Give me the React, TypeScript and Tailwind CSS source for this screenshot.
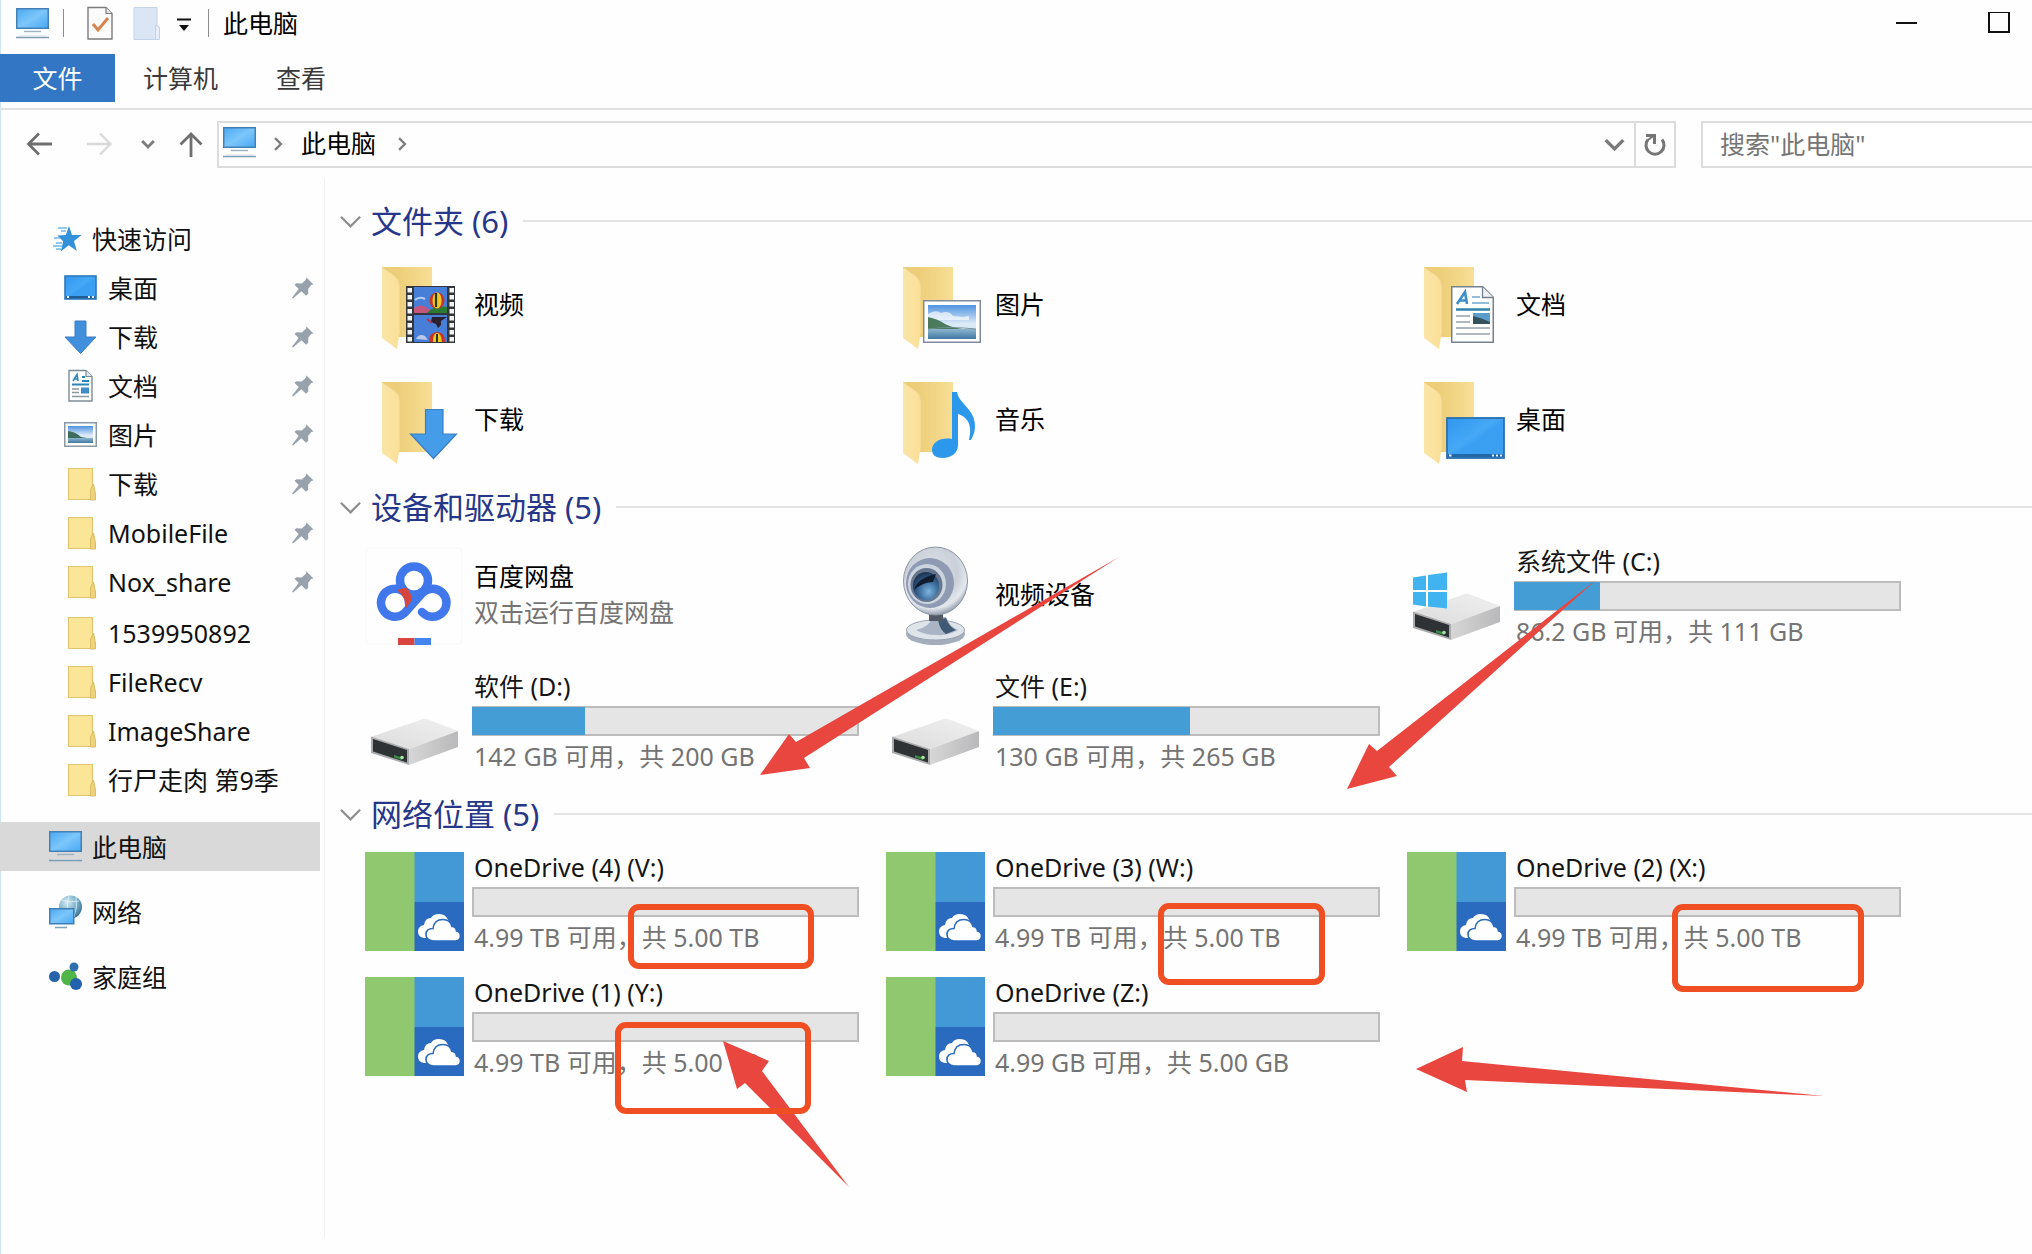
import type { ReactNode } from 'react';

const FONT = "font-['Noto_Sans','Noto_Sans_CJK_SC',sans-serif]";

/* ---------- small icons ---------- */

function Gradients() {
  return (
    <svg width="0" height="0" className="absolute" aria-hidden="true">
      <defs>
        <linearGradient id="screen" x1="0" y1="0" x2="1" y2="1">
          <stop offset="0" stopColor="#4aa9f0" />
          <stop offset="0.5" stopColor="#7cc6fb" />
          <stop offset="1" stopColor="#48a8f2" />
        </linearGradient>
        <linearGradient id="desk" x1="0" y1="0" x2="1" y2="1">
          <stop offset="0" stopColor="#2f97ee" />
          <stop offset="0.45" stopColor="#46a8f6" />
          <stop offset="0.55" stopColor="#3a9ff2" />
          <stop offset="1" stopColor="#3d9ff0" />
        </linearGradient>
        <linearGradient id="back" x1="0" y1="0" x2="1" y2="0">
          <stop offset="0.3" stopColor="#eccd78" />
          <stop offset="1" stopColor="#f8df96" />
        </linearGradient>
        <linearGradient id="flap" x1="0" y1="0" x2="1" y2="0">
          <stop offset="0" stopColor="#fae5a6" />
          <stop offset="1" stopColor="#fbdf98" />
        </linearGradient>
        <linearGradient id="sky" x1="0" y1="0" x2="0" y2="1">
          <stop offset="0" stopColor="#4f93e0" />
          <stop offset="0.55" stopColor="#dcebf7" />
          <stop offset="1" stopColor="#cfe2ee" />
        </linearGradient>
        <linearGradient id="water" x1="0" y1="0" x2="0" y2="1">
          <stop offset="0" stopColor="#8fb5cf" />
          <stop offset="1" stopColor="#3f78a3" />
        </linearGradient>
        <linearGradient id="driveTop" x1="0" y1="1" x2="1" y2="0">
          <stop offset="0" stopColor="#dcdcdc" />
          <stop offset="1" stopColor="#f0f0f0" />
        </linearGradient>
        <linearGradient id="driveSide" x1="0" y1="0" x2="1" y2="0">
          <stop offset="0" stopColor="#d6d6d6" />
          <stop offset="1" stopColor="#b9b9bb" />
        </linearGradient>
        <radialGradient id="cam" cx="0.45" cy="0.35" r="0.65">
          <stop offset="0" stopColor="#dfe3ea" />
          <stop offset="0.6" stopColor="#c9ced8" />
          <stop offset="0.85" stopColor="#e4e8ee" />
          <stop offset="1" stopColor="#98a1b0" />
        </radialGradient>
        <radialGradient id="lens" cx="0.6" cy="0.7" r="0.7">
          <stop offset="0" stopColor="#7db4dd" />
          <stop offset="0.5" stopColor="#3e6f9f" />
          <stop offset="1" stopColor="#1d3350" />
        </radialGradient>
        <radialGradient id="globe" cx="0.35" cy="0.3" r="0.8">
          <stop offset="0" stopColor="#d5ecf4" />
          <stop offset="0.6" stopColor="#6fa9c2" />
          <stop offset="1" stopColor="#2f6a8a" />
        </radialGradient>
      </defs>
    </svg>
  );
}

function MonitorIcon() {
  return (
    <svg width="33" height="33" viewBox="0 0 33 33" className="shrink-0" aria-hidden="true">
      <rect x="0.75" y="1.75" width="31.5" height="19.5" fill="url(#screen)" stroke="#4480b5" strokeWidth="1.5" />
      <path d="M8 24.5h17" stroke="#9db3c4" strokeWidth="1.4" />
      <path d="M0 30.5h33" stroke="#7d9db5" strokeWidth="1.5" />
      <path d="M3 29h27" stroke="#d4dde4" strokeWidth="1" />
    </svg>
  );
}

function StarIcon() {
  return (
    <svg width="33" height="28" viewBox="0 0 33 28" className="shrink-0" aria-hidden="true">
      <path
        d="M20 1l3 8.900 9.500.1-7.500 6 2.800 9.900-8-5.700-8 6.300 2.400-10.300-5.900-5.700 8.500-.6z"
        fill="#3391da"
      />
      <path d="M9 3h9M12 6h5M5 13h6M4 21h9M7 18h6M7 24h5" stroke="#6db8ee" strokeWidth="1.400" />
    </svg>
  );
}

function DesktopSmall() {
  return (
    <svg width="33" height="33" viewBox="0 0 33 33" className="shrink-0" aria-hidden="true">
      <rect x="1" y="5" width="31" height="23" fill="url(#desk)" stroke="#2d78bb" strokeWidth="1.6" />
      <path d="M2 26.2h29" stroke="#1f5d94" strokeWidth="2.4" />
      <path d="M3 26h2M24 26h2M28 26h2" stroke="#e8f4ff" strokeWidth="1.8" />
    </svg>
  );
}

function DownloadSmall() {
  return (
    <svg width="33" height="34" viewBox="0 0 33 34" className="shrink-0" aria-hidden="true">
      <path d="M11 1h11v16h10L16.500 33.500 1 17h10z" fill="#428fdc" stroke="#3b80c4" />
    </svg>
  );
}

function DocumentSmall() {
  return (
    <svg width="33" height="34" viewBox="0 0 33 34" className="shrink-0" aria-hidden="true">
      <path d="M5 1.500h17l6 6V32H5z" fill="#fff" stroke="#7d8b97" strokeWidth="1.4" />
      <path d="M22 1.500v6h6" fill="#e3e8ec" stroke="#7d8b97" strokeWidth="1.2" />
      <path d="M9 12l4-6.500 1 6.500M10.500 10h4" stroke="#2f83bf" strokeWidth="1.6" fill="none" />
      <path d="M18 8h3M18 12h7M8 15.500h17" stroke="#2b86b8" strokeWidth="1.8" />
      <path d="M8 20h7M8 23.500h7M8 27.500h17" stroke="#8b979f" strokeWidth="1.3" />
      <rect x="17" y="18.500" width="8" height="6" fill="#3f8dc8" />
    </svg>
  );
}

function PictureSmall() {
  return (
    <svg width="33" height="33" viewBox="0 0 33 33" className="shrink-0" aria-hidden="true">
      <rect x="0.75" y="4.75" width="31.500" height="23.500" fill="#fff" stroke="#8a98a6" strokeWidth="1.5" />
      <rect x="4" y="8" width="25" height="17" fill="url(#sky)" />
      <path d="M4 13q8 1 13 6l12 2H4z" fill="#3d6b5c" />
      <path d="M4 20h25v5H4z" fill="url(#water)" />
    </svg>
  );
}

function FolderSmall() {
  return (
    <svg width="33" height="34" viewBox="0 0 33 34" className="shrink-0" aria-hidden="true">
      <path d="M4.500 1.500h24v31h-24z" fill="#fbe597" stroke="#e2c571" strokeWidth="1.2" />
      <path d="M26.500 33V23l3-6 2 10v6z" fill="#efd27c" stroke="#dcbc62" />
    </svg>
  );
}

function NetworkSmall() {
  return (
    <svg width="33" height="34" viewBox="0 0 33 34" className="shrink-0" aria-hidden="true">
      <circle cx="21.500" cy="12" r="11.500" fill="url(#globe)" />
      <path d="M13 5q8 3 17 1M20 1q-4 10 2 22M27 2q2 9-2 20" stroke="#e3f2f7" strokeWidth="0.8" fill="none" />
      <rect x="0.75" y="13.750" width="24" height="15" fill="url(#screen)" stroke="#3f7fb5" strokeWidth="1.5" />
      <path d="M6 32.500h12" stroke="#7fa3bd" strokeWidth="1.600" />
    </svg>
  );
}

function HomegroupSmall() {
  return (
    <svg width="33" height="30" viewBox="0 0 33 30" className="shrink-0" aria-hidden="true">
      <circle cx="20" cy="15.500" r="8" fill="#4fb548" />
      <circle cx="5.500" cy="14.500" r="5.500" fill="#2763ab" />
      <circle cx="25" cy="5" r="4.500" fill="#2f6cae" />
      <circle cx="27" cy="22" r="6" fill="#2360ad" />
    </svg>
  );
}

function PinIcon() {
  return (
    <svg width="22" height="22" viewBox="0 0 22 22" className="shrink-0" role="img" aria-label="已固定">
      <path
        d="M14.500 0.500l7 7-2.300.6-3 3.600 0 5-2.200 2.100-4.600-4.600L1 21.500 0 20.700l6.700-8.600-4.200-4.300 2-1.600 5.300.3 3.800-3.400z"
        fill="#97a2ad"
      />
    </svg>
  );
}

function Chevron({ dir, size, color, width }: { dir: 'down' | 'right'; size: number; color: string; width: number }) {
  return (
    <svg width={size} height={size} viewBox="0 0 24 24" fill="none" className="shrink-0" aria-hidden="true">
      <path d={dir === 'down' ? 'M2 7l10 10L22 7' : 'M7 2l10 10L7 22'} stroke={color} strokeWidth={width} />
    </svg>
  );
}

/* ---------- tile icons, drawn on a 99 × 99 cell ---------- */

function Tile({ children }: { children: ReactNode }) {
  return (
    <svg width="99" height="99" viewBox="0 0 99 99" className="shrink-0" aria-hidden="true">
      {children}
    </svg>
  );
}

function FolderBase() {
  return (
    <>
      <path d="M17 11h50v70H33z" fill="url(#back)" />
      <path d="M17 11l13 9q5 4 5 10v45l-3 18-15-11z" fill="url(#flap)" />
      <path d="M17 11l13 9q5 4 5 10v45" fill="none" stroke="#efd08a" strokeWidth="1" />
    </>
  );
}

function VideoTile() {
  const holes = [32, 39, 46, 53, 60, 67, 74, 81];
  return (
    <Tile>
      <FolderBase />
      <rect x="41" y="30" width="49" height="57" fill="#33373b" />
      {holes.map((y) => (
        <g key={y} fill="#f2f4f2">
          <rect x="42.500" y={y} width="4.500" height="4.500" />
          <rect x="84.500" y={y} width="4.500" height="4.500" />
        </g>
      ))}
      <rect x="49" y="31" width="33" height="26" fill="#477fd8" />
      <rect x="49" y="59" width="33" height="27" fill="#477fd8" />
      <path d="M49 52q7-5 14 0l3 5H49z" fill="#c4567c" />
      <path d="M62 57q8-9 20-6v6z" fill="#2d7a35" />
      <path d="M50 44q4-4 10-1" stroke="#b9cdf0" strokeWidth="2" fill="none" />
      <ellipse cx="72" cy="44.500" rx="7.500" ry="8" fill="#c7342c" />
      <ellipse cx="72" cy="44.500" rx="4.500" ry="8" fill="#f2c91f" />
      <path d="M71 37v14" stroke="#273526" strokeWidth="2.200" />
      <path d="M67 61h15l-6 4v4l-3 3-2-4-5-2z" fill="#2a2030" />
      <path d="M62 63l5 4" stroke="#b53349" strokeWidth="2" />
      <path d="M51 83q3-6 9-3l3 4z" fill="#b7c8ea" />
      <path d="M64 86q0-10 8-10t8 10z" fill="#c7342c" />
      <path d="M68 86q0-9 4-9t5 9z" fill="#f2c91f" />
      <path d="M72 78v8" stroke="#273526" strokeWidth="2" />
    </Tile>
  );
}

function PicturesTile() {
  return (
    <Tile>
      <FolderBase />
      <rect x="37.750" y="44.750" width="56.500" height="41.500" fill="#fff" stroke="#7f8ba0" strokeWidth="1.500" />
      <rect x="42" y="49" width="48" height="34" fill="url(#sky)" />
      <path d="M42 58q8-5 13-1 8-3 12 3l10 1 6-1v4H42z" fill="#fff" opacity=".65" />
      <path d="M42 61q10 2 17 7 8 4 18 5l13 1H42z" fill="#4c7a5c" />
      <path d="M42 73h48v10H42z" fill="url(#water)" />
      <path d="M42 73q20-3 48 0" stroke="#6d8f93" strokeWidth="1.200" fill="none" />
    </Tile>
  );
}

function DocumentsTile() {
  return (
    <Tile>
      <FolderBase />
      <path d="M44.750 30.750h31l10.500 10.500v45H44.750z" fill="#fff" stroke="#75818c" strokeWidth="1.500" />
      <path d="M75.500 31v10.500h11" fill="#eef1f3" stroke="#75818c" strokeWidth="1.300" />
      <path d="M50 48l8-12 2 12M52.500 44.500h7" stroke="#3d8fc9" strokeWidth="2.600" fill="none" />
      <path d="M65 41h8M65 47h17" stroke="#6ea8cc" strokeWidth="1.600" />
      <path d="M49 53.500h34" stroke="#2f83ad" strokeWidth="2.400" />
      <path d="M49 60h14M49 66h14M49 72h34M49 78h34" stroke="#98a2a8" strokeWidth="1.600" />
      <rect x="66" y="57" width="17" height="11" fill="#5b9ccb" />
      <path d="M66 60q8 2 17 6v2H66z" fill="#34515c" />
    </Tile>
  );
}

function DownloadsTile() {
  return (
    <Tile>
      <FolderBase />
      <path d="M60.500 38.500h17.500V63h13.500L68.500 87.500 45.500 63h15z" fill="#459ce8" stroke="#3a7fc0" strokeWidth="1.200" />
    </Tile>
  );
}

function MusicTile() {
  return (
    <Tile>
      <FolderBase />
      <path
        d="M66 21h5c2 12 18 17 18 34 0 6-2 10-4 14h-2c3-12 1-22-11-26v31c0 8-7 13-15 13-7 0-11-3-11-8 0-8 9-13 20-11z"
        fill="#2b98ec"
      />
    </Tile>
  );
}

function DesktopTile() {
  return (
    <Tile>
      <FolderBase />
      <rect x="40" y="47" width="57" height="40" fill="url(#desk)" stroke="#2c6fae" strokeWidth="1.800" />
      <path d="M41 84.500h55" stroke="#2267a6" strokeWidth="3" />
      <path d="M42 84.500h2.500M85 84.500h2M89 84.500h2M93 84.500h2" stroke="#e4f2ff" strokeWidth="2" />
    </Tile>
  );
}

function DriveShape() {
  return (
    <>
      <path d="M6 66l52-18q2-.6 4 0l31 12-49 18z" fill="url(#driveTop)" />
      <path d="M44 78l49-18v16L48 92.500 44 94z" fill="url(#driveSide)" />
      <path d="M6 65.500L44 78v16L6 82z" fill="#a9abac" />
      <path d="M8 68l34 11v12.500L8 80.500z" fill="#2e3234" />
      <path d="M29 84l8 2.500v2.500l-8-2.500z" fill="#3b8a45" />
      <circle cx="37" cy="86.500" r="1.800" fill="#a5e6a1" />
    </>
  );
}

function DriveTile() {
  return (
    <Tile>
      <DriveShape />
    </Tile>
  );
}

function SystemDriveTile() {
  return (
    <Tile>
      <DriveShape />
      <path d="M6 31.500l13-2v14.500H6zM21 29l19-2.500V44H21zM6 46h13v14.500L6 58.500zM21 46h19v16.500L21 60.500z" fill="#41b3ee" />
    </Tile>
  );
}

function BaiduTile() {
  return (
    <Tile>
      <rect x="1" y="2" width="96" height="96" rx="4" fill="#fefefe" stroke="#f7f7f9" />
      <g fill="none" strokeWidth="8.500" stroke="#4078ec">
        <circle cx="49" cy="34.500" r="14" />
        <path d="M44 57a14 14 0 1 0-4.500 10L57 47.500a14 14 0 1 1 0 18.500" strokeLinecap="round" />
      </g>
      <path d="M32 44l9-2.500q6 5 5.500 13L40 63.500q2-12-8-19.500z" fill="#d5453c" />
      <path d="M33 92h16.500v7H33z" fill="#d8453e" />
      <path d="M49.500 92H66v7H49.500z" fill="#4584ee" />
    </Tile>
  );
}

function WebcamTile() {
  return (
    <Tile>
      <ellipse cx="49.500" cy="88" rx="29.500" ry="11" fill="#a3adbb" />
      <ellipse cx="49.500" cy="84" rx="29" ry="10" fill="#dfe4ea" stroke="#9aa5b4" />
      <path d="M30 84q14-3 16-13h14q4 10 12 13-10 6-21 5-13 0-21-5z" fill="#a9b4c4" />
      <path d="M52 74l8-2q3 9 10 12l-10 4q-6-4-8-14z" fill="#3f5873" />
      <path d="M43 67h14v8H43z" fill="#525866" />
      <ellipse cx="49.500" cy="35" rx="32" ry="34" fill="url(#cam)" stroke="#8b95a4" />
      <ellipse cx="44" cy="37" rx="24" ry="25" fill="#8f9bb3" />
      <ellipse cx="41" cy="38" rx="19" ry="20" fill="#ccd4df" />
      <ellipse cx="40.500" cy="39" rx="16" ry="17" fill="#66768f" />
      <ellipse cx="40" cy="40" rx="13" ry="14" fill="url(#lens)" />
      <path d="M28 44q3-12 22-16l-3 8q-10 0-19 8z" fill="#101c2f" />
    </Tile>
  );
}

function OneDriveTile() {
  return (
    <Tile>
      <rect width="50" height="99" fill="#90c870" />
      <rect x="49.500" width="49.500" height="50" fill="#4299d6" />
      <rect x="49.500" y="50" width="49.500" height="49" fill="#2b6bbf" />
      <path d="M59 86q-6-1-6-6.500t6-6.500q1-7 7-7 2-4 8-4 7 0 9 6l3 8-20 10z" fill="#fff" />
      <path
        d="M68 89q-7-1-7-6.500 0-6 7-6 1-9 10-9 7 0 9 7 4 0 4.500 4.500 4 1 4 5T91 89z"
        fill="#fff"
        stroke="#2b6bbf"
        strokeWidth="1.600"
      />
    </Tile>
  );
}

/* ---------- data ---------- */

type Item = { name: string; icon: ReactNode; note?: string; used?: number };

const folders: Item[] = [
  { name: '视频', icon: <VideoTile /> },
  { name: '图片', icon: <PicturesTile /> },
  { name: '文档', icon: <DocumentsTile /> },
  { name: '下载', icon: <DownloadsTile /> },
  { name: '音乐', icon: <MusicTile /> },
  { name: '桌面', icon: <DesktopTile /> },
];

const devices: Item[] = [
  { name: '百度网盘', icon: <BaiduTile />, note: '双击运行百度网盘' },
  { name: '视频设备', icon: <WebcamTile /> },
  { name: '系统文件 (C:)', icon: <SystemDriveTile />, note: '86.2 GB 可用，共 111 GB', used: 22 },
  { name: '软件 (D:)', icon: <DriveTile />, note: '142 GB 可用，共 200 GB', used: 29 },
  { name: '文件 (E:)', icon: <DriveTile />, note: '130 GB 可用，共 265 GB', used: 51 },
];

const network: Item[] = [
  { name: 'OneDrive (4) (V:)', icon: <OneDriveTile />, note: '4.99 TB 可用，共 5.00 TB', used: 0 },
  { name: 'OneDrive (3) (W:)', icon: <OneDriveTile />, note: '4.99 TB 可用，共 5.00 TB', used: 0 },
  { name: 'OneDrive (2) (X:)', icon: <OneDriveTile />, note: '4.99 TB 可用，共 5.00 TB', used: 0 },
  { name: 'OneDrive (1) (Y:)', icon: <OneDriveTile />, note: '4.99 TB 可用，共 5.00 TB', used: 0 },
  { name: 'OneDrive (Z:)', icon: <OneDriveTile />, note: '4.99 GB 可用，共 5.00 GB', used: 0 },
];

const pinned = [
  { name: '桌面', icon: <DesktopSmall /> },
  { name: '下载', icon: <DownloadSmall /> },
  { name: '文档', icon: <DocumentSmall /> },
  { name: '图片', icon: <PictureSmall /> },
  { name: '下载', icon: <FolderSmall /> },
  { name: 'MobileFile', icon: <FolderSmall /> },
  { name: 'Nox_share', icon: <FolderSmall /> },
];

const recent = ['1539950892', 'FileRecv', 'ImageShare', '行尸走肉 第9季'];

/* ---------- page parts ---------- */

function TitleBar() {
  return (
    <header className="flex h-12 items-center pb-[2px] pl-4">
      <MonitorIcon />
      <span className="ml-[14px] h-7 w-px bg-[#8c8c8c]" />
      <button type="button" aria-label="属性" className="ml-[23px]">
        <svg width="26" height="34" viewBox="0 0 26 34">
          <path d="M1 1.500h18l6 6V33H1z" fill="#fbfbfb" stroke="#7c7c7c" strokeWidth="1.400" />
          <path d="M19 1.500v6h6" fill="#e5e5e5" stroke="#7c7c7c" strokeWidth="1.200" />
          <path d="M6 18l5 6 10-12" stroke="#d9824a" strokeWidth="3" fill="none" />
        </svg>
      </button>
      <button type="button" aria-label="新建文件夹" className="ml-5">
        <svg width="27" height="34" viewBox="0 0 27 34">
          <path d="M1 1.500h23v32H1z" fill="#dbe6f5" stroke="#c3d3ea" />
          <path d="M22.500 33.500V19l4 2v12.500z" fill="#e6eef9" stroke="#c3d3ea" />
        </svg>
      </button>
      <button type="button" aria-label="自定义快速访问工具栏" className="ml-4 mt-1">
        <svg width="16" height="14" viewBox="0 0 16 14">
          <path d="M1 1.500h14" stroke="#111" strokeWidth="2" />
          <path d="M3 7h10l-5 6z" fill="#111" />
        </svg>
      </button>
      <span className="ml-4 h-7 w-px bg-[#8c8c8c]" />
      <h1 className="ml-[14px] text-[25px] leading-8 text-black">此电脑</h1>
      <div className="ml-auto flex items-center gap-[70px] pr-[22px]">
        <button type="button" aria-label="最小化">
          <svg width="22" height="22" viewBox="0 0 22 22">
            <path d="M0 11h21" stroke="#111" strokeWidth="2" />
          </svg>
        </button>
        <button type="button" aria-label="最大化">
          <svg width="22" height="22" viewBox="0 0 22 22">
            <rect x="1" y="0" width="20" height="20" fill="none" stroke="#111" strokeWidth="2" />
          </svg>
        </button>
      </div>
    </header>
  );
}

function Ribbon() {
  return (
    <nav className="flex h-[62px] items-center border-b-2 border-[#e2e2e2] text-[25px] leading-8">
      <button type="button" className="h-12 w-[115px] bg-[#3276c4] text-white">
        文件
      </button>
      <button type="button" className="ml-7 h-12 text-[#3a3a3a]">
        计算机
      </button>
      <button type="button" className="ml-[58px] h-12 text-[#3a3a3a]">
        查看
      </button>
    </nav>
  );
}

function AddressRow() {
  return (
    <div className="flex h-[68px] items-center">
      <div className="flex w-[217px] shrink-0 items-center pl-[26px]">
        <button type="button" aria-label="后退">
          <svg width="26" height="24" viewBox="0 0 26 24" fill="none" stroke="#6f6f6f" strokeWidth="2.800">
            <path d="M26 12H3M13 1.500L2.500 12 13 22.500" />
          </svg>
        </button>
        <button type="button" aria-label="前进" className="ml-[35px]">
          <svg width="26" height="24" viewBox="0 0 26 24" fill="none" stroke="#d9d9d9" strokeWidth="2.400">
            <path d="M0 12h23M13 1.500L23.500 12 13 22.500" />
          </svg>
        </button>
        <button type="button" aria-label="最近浏览的位置" className="ml-7">
          <Chevron dir="down" size={14} color="#7d7d7d" width={5} />
        </button>
        <button type="button" aria-label="上移" className="ml-6">
          <svg width="24" height="26" viewBox="0 0 24 26" fill="none" stroke="#6f6f6f" strokeWidth="2.800">
            <path d="M12 26V3M1.500 13.500L12 3l10.500 10.500" />
          </svg>
        </button>
      </div>
      <div className="flex h-[47px] min-w-0 flex-1 items-center border-2 border-[#dcdcdc] pl-1">
        <div className="flex items-center pb-[3px]">
          <MonitorIcon />
          <span className="ml-[15px] flex pt-[2px]">
            <Chevron dir="right" size={14} color="#7d7d7d" width={4} />
          </span>
          <button type="button" className="ml-4 text-[25px] leading-8 text-black">
            此电脑
          </button>
          <span className="ml-[19px] flex pt-[2px]">
            <Chevron dir="right" size={14} color="#7d7d7d" width={4} />
          </span>
        </div>
        <button type="button" aria-label="以前的位置" className="ml-auto flex h-full w-10 items-center justify-center">
          <Chevron dir="down" size={21} color="#7a7a7a" width={4} />
        </button>
        <button
          type="button"
          aria-label="刷新"
          className="flex h-full w-10 items-center justify-center border-l-2 border-[#dcdcdc]"
        >
          <svg width="24" height="26" viewBox="0 0 24 26" fill="none" stroke="#757575" strokeWidth="3">
            <path d="M19 8.500a9 9 0 1 1-14 0" />
            <path d="M3 4.500h8.500v8.500" />
            <path d="M5 9l6-4.500" strokeWidth="2" />
          </svg>
        </button>
      </div>
      <input
        type="search"
        aria-label="搜索此电脑"
        placeholder={'搜索"此电脑"'}
        className="ml-[25px] h-[47px] w-[331px] border-2 border-r-0 border-[#dcdcdc] bg-white pl-[17px] text-[25px] leading-8 text-[#6f6f6f] outline-none placeholder:text-[#757575]"
      />
    </div>
  );
}

function SideLink({ icon, label, pin }: { icon: ReactNode; label: string; pin?: boolean }) {
  return (
    <li>
      <a href="#" className="flex h-[49px] items-center gap-[11px] pr-[10px] pl-16">
        {icon}
        <span className="flex-1 whitespace-nowrap">{label}</span>
        {pin && <PinIcon />}
      </a>
    </li>
  );
}

function Sidebar() {
  return (
    <aside className="w-[325px] shrink-0 border-r border-[#f1f1f3] pt-9 text-[25px] leading-8 text-[#111]">
      <a href="#" className="flex h-[49px] items-center gap-[10px] pl-[49px]">
        <StarIcon />
        快速访问
      </a>
      <ul>
        {pinned.map((p, i) => (
          <SideLink key={i} icon={p.icon} label={p.name} pin />
        ))}
      </ul>
      <ul className="mt-[2px]">
        {recent.map((name) => (
          <SideLink key={name} icon={<FolderSmall />} label={name} />
        ))}
      </ul>
      <div className="mt-[18px] flex flex-col gap-4">
        <a href="#" aria-current="page" className="flex h-[49px] w-80 items-center gap-[10px] bg-[#d9d9d9] pl-[49px]">
          <MonitorIcon />
          此电脑
        </a>
        <a href="#" className="flex h-[49px] w-80 items-center gap-[10px] pl-[49px]">
          <NetworkSmall />
          网络
        </a>
        <a href="#" className="flex h-[49px] w-80 items-center gap-[10px] pl-[49px]">
          <HomegroupSmall />
          家庭组
        </a>
      </div>
    </aside>
  );
}

function SectionHeader({ title }: { title: string }) {
  return (
    <h2 className="text-[31px] leading-10 text-[#26378a]">
      <button type="button" aria-expanded="true" className="flex w-full items-center gap-[9px] text-left">
        <Chevron dir="down" size={23} color="#8f8f8f" width={2.4} />
        <span className="whitespace-nowrap">{title}</span>
        <span className="ml-[6px] h-[2px] flex-1 bg-[#e3e3e5]" />
      </button>
    </h2>
  );
}

function ItemTile({ item }: { item: Item }) {
  if (item.used === undefined) {
    return (
      <li className="flex h-[99px] items-center gap-2">
        {item.icon}
        <div className="flex w-[387px] flex-col pb-1 pl-[2px] text-[25px] leading-9">
          <span className="text-black">{item.name}</span>
          {item.note && <span className="text-[#747474]">{item.note}</span>}
        </div>
      </li>
    );
  }
  return (
    <li className="flex h-[99px] items-center gap-2">
      {item.icon}
      <div className="flex w-[387px] flex-col gap-[5px] text-[25px] leading-[30px]">
        <span className="pl-[2px] text-[#151515]">{item.name}</span>
        <div
          role="meter"
          aria-label={item.name}
          aria-valuenow={item.used}
          aria-valuemin={0}
          aria-valuemax={100}
          className="h-[30px] border-2 border-[#bcbcbc] bg-[#e5e5e5]"
        >
          {item.used > 0 && (
            <div className="-my-px -ml-[2px] h-7 bg-[#459dd6]" style={{ width: `calc(${item.used}% + 2px)` }} />
          )}
        </div>
        <span className="pl-[2px] text-[#747474]">{item.note}</span>
      </div>
    </li>
  );
}

function Section({ title, items, grid }: { title: string; items: Item[]; grid: string }) {
  return (
    <section>
      <SectionHeader title={title} />
      <ul className={grid}>
        {items.map((item) => (
          <ItemTile key={item.name} item={item} />
        ))}
      </ul>
    </section>
  );
}

/* Hand-drawn markup that floats above the window. */
function Annotations() {
  return (
    <svg
      width="2032"
      height="1254"
      viewBox="0 0 2032 1254"
      className="pointer-events-none absolute top-0 left-0"
      aria-hidden="true"
    >
      <g fill="#e8463f">
        <path d="M760 775L789 734 796 742 1119 557 804 758 810 768z" />
        <path d="M1347 789L1369 744 1377 751 1596 580 1389 767 1397 776z" />
        <path d="M723 1041L769 1061 762 1071 849 1187 745 1083 737 1089z" />
        <path d="M1416 1069L1463 1047 1462 1061 1824 1096 1465 1080 1467 1092z" />
      </g>
      <g fill="none" stroke="#f04f24" strokeWidth="6">
        <rect x="631" y="907" width="180" height="59" rx="8" />
        <rect x="1161" y="906" width="161" height="76" rx="8" />
        <rect x="1675" y="907" width="186" height="82" rx="8" />
        <rect x="618" y="1025" width="190" height="86" rx="8" />
      </g>
    </svg>
  );
}

export default function App() {
  return (
    <div
      className={`relative flex min-h-screen flex-col overflow-hidden bg-[#fefefe] shadow-[inset_1px_0_0_#cfe4f3] ${FONT}`}
    >
      <Gradients />
      <TitleBar />
      <Ribbon />
      <AddressRow />
      <div className="mb-4 flex flex-1">
        <Sidebar />
        <main className="flex min-w-0 flex-1 flex-col pt-[23px] pl-[14px]">
          <Section
            title="文件夹 (6)"
            items={folders}
            grid="mt-[15px] mb-[17px] ml-[26px] grid grid-cols-[repeat(auto-fill,521px)] gap-y-4"
          />
          <Section
            title="设备和驱动器 (5)"
            items={devices}
            grid="mt-[19px] mb-6 ml-[26px] grid grid-cols-[repeat(auto-fill,521px)] gap-y-[26px]"
          />
          <Section
            title="网络位置 (5)"
            items={network}
            grid="mt-[18px] ml-[26px] grid grid-cols-[repeat(auto-fill,521px)] gap-y-[26px]"
          />
        </main>
      </div>
      <Annotations />
    </div>
  );
}
